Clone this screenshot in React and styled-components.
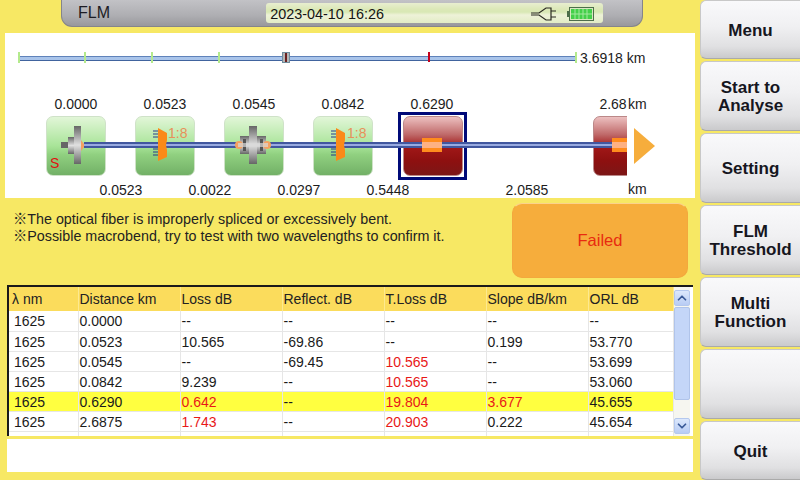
import React from 'react';
import styled, { createGlobalStyle } from 'styled-components';
import { ChevronUp, ChevronDown } from 'lucide-react';

const GlobalStyle = createGlobalStyle`
  html, body {
    margin: 0;
    padding: 0;
    background: #f7e864;
  }
  body {
    font-family: "Liberation Sans", Arial, sans-serif;
    color: #111;
  }
`;

const Screen = styled.div`
  width: 800px;
  height: 480px;
  display: flex;
  overflow: hidden;
  background: #f7e864;
`;

const Left = styled.div`
  width: 700px;
  display: flex;
  flex-direction: column;
`;

const Header = styled.div`
  width: 582px;
  height: 27px;
  margin-left: 61px;
  box-sizing: border-box;
  display: flex;
  align-items: center;
  padding: 0 39px 1px 16px;
  background: linear-gradient(#c2c2c6, #aeaeb2 60%, #98989c);
  border: 1px solid #85858a;
  border-top: none;
  border-radius: 0 0 11px 11px;
`;

const Title = styled.div`
  width: 189px;
  font-size: 16px;
  color: #1c1c24;
`;

const DateBox = styled.div`
  width: 338px;
  height: 20px;
  margin-top: 1px;
  box-sizing: border-box;
  display: flex;
  align-items: center;
  padding: 1px 9px 0 4px;
  border-radius: 3px;
  background: linear-gradient(#e8eed0, #dce8b8 30%, #d8e8b4 45%, #eef2d8 60%, #e2ecc4);
  font-size: 14.4px;
  color: #141414;
`;

const DateText = styled.span`
  flex: 1;
`;

const PlugIcon = styled.svg`
  width: 26px;
  height: 14px;
  margin-right: 10px;
`;

const BatteryIcon = styled.svg`
  width: 27px;
  height: 14px;
`;

const Panel = styled.div`
  width: 690px;
  height: 165px;
  margin: 6px 5px 0;
  background: #fff;
`;

const RulerRow = styled.div`
  display: flex;
  align-items: center;
  height: 14px;
  padding: 18px 0 0 13px;
  font-size: 14px;
  color: #222;
`;

const RulerTrack = styled.div`
  position: relative;
  width: 559px;
  height: 5px;
  box-sizing: border-box;
  margin-right: 3px;
  background: #a9c4ea;
  border-top: 1px solid #5f82ba;
  border-bottom: 1px solid #41649e;
`;

const RulerTick = styled.div`
  position: absolute;
  top: -5px;
  width: 2px;
  height: ${(p) => (p.$red ? 10 : 11)}px;
  background: ${(p) => (p.$red ? '#c4001c' : '#b4ea8c')};
`;

const RulerMarker = styled.div`
  position: absolute;
  top: -5px;
  width: 8px;
  height: 11px;
  box-sizing: border-box;
  border: 1px solid #6e8c9c;
  background: linear-gradient(90deg, #b5b5b5 30%, #6b2020 30%, #6b2020 70%, #b5b5b5 70%);
`;

const DiagramRow = styled.div`
  display: flex;
  height: 102px;
  margin-top: 31px;
`;

const Canvas = styled.div`
  position: relative;
  width: 622px;
  height: 102px;
  overflow: hidden;
`;

const Side = styled.div`
  display: flex;
  flex-direction: column;
  justify-content: space-between;
  align-items: flex-start;
  padding: 0 0 0 1px;
  font-size: 14px;
  color: #222;
  height: 101px;
`;

const Arrow = styled.div`
  margin-left: 6px;
  margin-top: -2px;
  width: 0;
  height: 0;
  border-left: 21px solid #f6ad3c;
  border-top: 18px solid transparent;
  border-bottom: 18px solid transparent;
`;

const Distance = styled.div`
  position: absolute;
  top: ${(p) => (p.$lower ? 86 : 0)}px;
  left: ${(p) => p.$x - 30}px;
  width: 60px;
  text-align: center;
  font-size: 14px;
  line-height: 16px;
  color: #1c1c1c;
`;

const Node = styled.div`
  position: absolute;
  top: 20px;
  left: ${(p) => p.$x}px;
  width: 60px;
  height: 60px;
  box-sizing: border-box;
  border-radius: 7px;
  border: 1px solid ${(p) => (p.$fault ? '#b88' : '#cfe2c8')};
  background: ${(p) =>
    p.$fault
      ? 'linear-gradient(#ecc0c0, #c06a6a 30%, #a01818 52%, #8e1010 75%, #7c1616)'
      : 'linear-gradient(#e2f6d8, #a8e498 50%, #90d080 65%, #72b066)'};
`;

const Selection = styled.div`
  position: absolute;
  top: 16px;
  left: 393px;
  width: 69px;
  height: 68px;
  box-sizing: border-box;
  border: 3px solid #000a78;
`;

const Fiber = styled.div`
  position: absolute;
  top: 46px;
  left: 79px;
  width: 545px;
  height: 6px;
  box-sizing: border-box;
  background: #98aae0;
  border-top: 2px solid #41579f;
  border-bottom: 2px solid #41579f;
`;

const Glyph = styled.svg`
  position: absolute;
  top: 20px;
  left: ${(p) => p.$x}px;
  width: 60px;
  height: 60px;
`;

const EventMark = styled.div`
  position: absolute;
  top: 42px;
  left: ${(p) => p.$x}px;
  width: 20px;
  height: 14px;
  background: linear-gradient(#ff8c1e 4px, #fdb184 4px, #fdb184 10px, #ff8c1e 10px);
`;

const Ratio = styled.div`
  position: absolute;
  top: 29px;
  left: ${(p) => p.$x}px;
  font-size: 14px;
  line-height: 16px;
  color: #e8905a;
`;

const StartTag = styled.div`
  position: absolute;
  top: 60px;
  left: 45px;
  font-size: 14px;
  line-height: 15px;
  color: #e01010;
`;

const StatusRow = styled.div`
  display: flex;
  height: 87px;
`;

const Messages = styled.div`
  width: 512px;
  box-sizing: border-box;
  padding: 13px 0 0 13px;
  font-size: 14.3px;
  line-height: 17px;
  color: #222;
  font-family: "Liberation Sans", "Noto Sans CJK JP", sans-serif;
`;

const FailedBox = styled.div`
  width: 176px;
  height: 75px;
  margin: 5px 0 0 0;
  box-sizing: border-box;
  display: flex;
  align-items: center;
  justify-content: center;
  border-radius: 10px;
  border: 1px solid #f3a83e;
  border-top-color: #fbd28c;
  background: #f6ad3c;
  font-size: 16.5px;
  color: #e82a10;
`;

const TableFrame = styled.div`
  width: 686px;
  height: 151px;
  margin-left: 7px;
  box-sizing: border-box;
  display: flex;
  background: #fff;
  border-left: 2px solid #1a1a1a;
  border-top: 2px solid #1a1a1a;
`;

const Table = styled.table`
  width: 664px;
  height: 149px;
  table-layout: fixed;
  border-collapse: collapse;
  font-size: 14px;
`;

const HeadRow = styled.tr`
  height: 24px;
  background: #fbdc5c;
`;

const HeadCell = styled.th`
  padding: 0 0 0 1px;
  text-align: left;
  font-weight: normal;
  color: #222;
  border-right: 1px solid #fde98f;
  &:first-child {
    padding-left: 3px;
  }
`;

const Row = styled.tr`
  height: 20px;
  background: ${(p) => (p.$active ? '#ffff40' : '#fff')};
`;

const Cell = styled.td`
  padding: 1px 0 0 1px;
  color: ${(p) => (p.$alert ? '#e81818' : '#1a1a1a')};
  border-right: 1px solid #e6e6e6;
  border-bottom: 1px solid #e6e6e6;
  white-space: nowrap;
  &:first-child {
    padding-left: 5px;
  }
`;

const FillerRow = styled.tr`
  height: 5px;
`;

const FillerCell = styled.td`
  padding: 0;
  border-right: 1px solid #e6e6e6;
`;

const ScrollBar = styled.div`
  width: 16px;
  display: flex;
  flex-direction: column;
  padding: 3px 0 2px;
  box-sizing: border-box;
  background: #f6f6f0;
`;

const ScrollButton = styled.div`
  height: 16px;
  box-sizing: border-box;
  display: flex;
  align-items: center;
  justify-content: center;
  border: 1px solid #b4c8ee;
  border-radius: 2px;
  background: linear-gradient(#dce8fc, #b8ccf4);
  color: #3a5a98;
`;

const ScrollThumb = styled.div`
  height: 93px;
  margin-top: 1px;
  box-sizing: border-box;
  border: 1px solid #b0c4ea;
  border-radius: 2px;
  background: #c4d6f8;
`;

const ScrollTrack = styled.div`
  flex: 1;
`;

const BottomBox = styled.div`
  width: 686px;
  height: 33px;
  margin: 3px 0 0 7px;
  background: #fff;
`;

const Menu = styled.div`
  width: 100px;
  display: flex;
  flex-direction: column;
  gap: 2px;
`;

const MenuButton = styled.div`
  height: ${(p) => p.$h}px;
  box-sizing: border-box;
  display: flex;
  align-items: center;
  justify-content: center;
  text-align: center;
  padding-top: 2px;
  font-size: 17px;
  line-height: 18px;
  font-weight: bold;
  color: #16161e;
  border: 1px solid #c8c8c8;
  border-right: none;
  border-bottom-color: #aaa;
  border-radius: 6px 0 0 6px;
  background: linear-gradient(#f9f9fb, #f0f0f2 45%, #e0e0e2 80%, #cacacc);
`;

const columns = [
  ['λ nm', 69],
  ['Distance km', 102],
  ['Loss dB', 102],
  ['Reflect. dB', 102],
  ['T.Loss dB', 102],
  ['Slope dB/km', 102],
  ['ORL dB', 85],
];

// a leading ! marks a value over threshold
const rows = [
  ['1625', '0.0000', '--', '--', '--', '--', '--'],
  ['1625', '0.0523', '10.565', '-69.86', '--', '0.199', '53.770'],
  ['1625', '0.0545', '--', '-69.45', '!10.565', '--', '53.699'],
  ['1625', '0.0842', '9.239', '--', '!10.565', '--', '53.060'],
  ['1625', '0.6290', '!0.642', '--', '!19.804', '!3.677', '45.655'],
  ['1625', '2.6875', '!1.743', '--', '!20.903', '0.222', '45.654'],
];

const upper = [
  ['0.0000', 71],
  ['0.0523', 160],
  ['0.0545', 249],
  ['0.0842', 338],
  ['0.6290', 427],
  ['2.68', 608],
];

const lower = [
  ['0.0523', 116],
  ['0.0022', 205],
  ['0.0297', 294],
  ['0.5448', 383],
  ['2.0585', 522],
];

const menuItems = [
  { label: ['Menu'], h: 59 },
  { label: ['Start to', 'Analyse'], h: 70 },
  { label: ['Setting'], h: 70 },
  { label: ['FLM', 'Threshold'], h: 70 },
  { label: ['Multi', 'Function'], h: 70 },
  { label: [], h: 70 },
  { label: ['Quit'], h: 59 },
];

const ticks = [0, 66, 133, 200, 557];

const Plug = () => (
  <PlugIcon viewBox="0 0 26 14">
    <path
      d="M0 6 H8 L15 1 H20 V13 H15 L8 8 H0 M20 4 H25 M20 10 H25"
      fill="none"
      stroke="#2a2a22"
      strokeWidth="1.2"
    />
  </PlugIcon>
);

const Battery = () => (
  <BatteryIcon viewBox="0 0 27 14">
    <rect x="2.5" y="0.5" width="24" height="13" fill="#d8e8c0" stroke="#4d6e4a" />
    <rect x="0" y="4" width="2.5" height="6" fill="#4d6e4a" />
    <rect x="4" y="2" width="21" height="10" fill="#44d04a" />
    <path d="M8 2 V12 M12 2 V12 M16 2 V12 M20 2 V12 M4 7 H25" stroke="#a4e8a0" strokeWidth="1" />
  </BatteryIcon>
);

const SteelDefs = () => (
  <defs>
    <linearGradient id="steel" x1="0" y1="0" x2="0" y2="1">
      <stop offset="0" stopColor="#666" />
      <stop offset="0.5" stopColor="#e0e0e0" />
      <stop offset="1" stopColor="#666" />
    </linearGradient>
  </defs>
);

const StartConnector = ({ x }) => (
  <Glyph $x={x} viewBox="0 0 60 60">
    <SteelDefs />
    <rect x="15" y="26" width="7" height="6" fill="#666" />
    <rect x="22" y="21" width="6" height="17" fill="url(#steel)" />
    <rect x="28" y="10" width="7" height="38" fill="url(#steel)" />
    <path d="M35 24 L38 28 V31 L35 35 Z" fill="#f4a060" />
  </Glyph>
);

const MidConnector = ({ x }) => (
  <Glyph $x={x} viewBox="0 0 60 60">
    <SteelDefs />
    <rect x="16" y="20" width="9" height="18" fill="url(#steel)" />
    <rect x="33" y="20" width="9" height="18" fill="url(#steel)" />
    <rect x="19" y="23" width="3" height="12" fill="#555" />
    <rect x="36" y="23" width="3" height="12" fill="#555" />
    <rect x="25" y="10" width="8" height="38" fill="url(#steel)" />
    <circle cx="15" cy="29" r="4" fill="#f4a060" />
    <circle cx="43" cy="29" r="4" fill="#f4a060" />
    <rect x="14" y="27" width="30" height="4" fill="#d8d8d8" opacity="0.7" />
  </Glyph>
);

const Splitter = ({ x }) => (
  <Glyph $x={x} viewBox="0 0 60 60">
    <path
      d="M18 15 H23 M18 18 H23 M18 21 H23 M18 33 H23 M18 36 H23 M18 39 H23"
      stroke="#2a3a88"
      strokeWidth="1"
    />
    <path d="M23 12 L32 17 V24 L31 29 L32 34 V41 L23 45 Z" fill="#fb8a18" />
  </Glyph>
);

const Diagram = () => (
  <DiagramRow>
    <Canvas>
      {upper.map(([value, pos]) => (
        <Distance key={value} $x={pos}>{value}</Distance>
      ))}
      <Node $x={41} />
      <Node $x={130} />
      <Node $x={219} />
      <Node $x={308} />
      <Node $x={398} $fault />
      <Node $x={588} $fault />
      <Selection />
      <Fiber />
      <StartConnector x={41} />
      <StartTag>S</StartTag>
      <Splitter x={130} />
      <Ratio $x={163}>1:8</Ratio>
      <MidConnector x={219} />
      <Splitter x={308} />
      <Ratio $x={342}>1:8</Ratio>
      <EventMark $x={417} />
      <EventMark $x={607} />
      {lower.map(([value, pos]) => (
        <Distance key={value} $x={pos} $lower>{value}</Distance>
      ))}
    </Canvas>
    <Side>
      <span>km</span>
      <Arrow />
      <span>km</span>
    </Side>
  </DiagramRow>
);

const ResultTable = () => (
  <TableFrame>
    <Table>
      <colgroup>
        {columns.map(([name, width]) => (
          <col key={name} width={width} />
        ))}
      </colgroup>
      <thead>
        <HeadRow>
          {columns.map(([name]) => (
            <HeadCell key={name}>{name}</HeadCell>
          ))}
        </HeadRow>
      </thead>
      <tbody>
        {rows.map((row, i) => (
          <Row key={row[1]} $active={i === 4}>
            {row.map((value, j) => (
              <Cell key={j} $alert={value[0] === '!'}>{value.replace('!', '')}</Cell>
            ))}
          </Row>
        ))}
        <FillerRow>
          {columns.map(([name]) => (
            <FillerCell key={name} />
          ))}
        </FillerRow>
      </tbody>
    </Table>
    <ScrollBar>
      <ScrollButton><ChevronUp size={14} strokeWidth={3} /></ScrollButton>
      <ScrollThumb />
      <ScrollTrack />
      <ScrollButton><ChevronDown size={14} strokeWidth={3} /></ScrollButton>
    </ScrollBar>
  </TableFrame>
);

export default function App() {
  return (
    <Screen>
      <GlobalStyle />
      <Left>
        <Header>
          <Title>FLM</Title>
          <DateBox>
            <DateText>2023-04-10 16:26</DateText>
            <Plug />
            <Battery />
          </DateBox>
        </Header>
        <Panel>
          <RulerRow>
            <RulerTrack>
              {ticks.map((t) => (
                <RulerTick key={t} style={{ left: t }} />
              ))}
              <RulerMarker style={{ left: 264 }} />
              <RulerTick $red style={{ left: 410 }} />
            </RulerTrack>
            3.6918 km
          </RulerRow>
          <Diagram />
        </Panel>
        <StatusRow>
          <Messages>
            ※The optical fiber is improperly spliced or excessively bent.
            <br />
            ※Possible macrobend, try to test with two wavelengths to confirm it.
          </Messages>
          <FailedBox>Failed</FailedBox>
        </StatusRow>
        <ResultTable />
        <BottomBox />
      </Left>
      <Menu>
        {menuItems.map((item, i) => (
          <MenuButton key={i} $h={item.h}>
            <div>
              {item.label.map((line) => (
                <div key={line}>{line}</div>
              ))}
            </div>
          </MenuButton>
        ))}
      </Menu>
    </Screen>
  );
}
